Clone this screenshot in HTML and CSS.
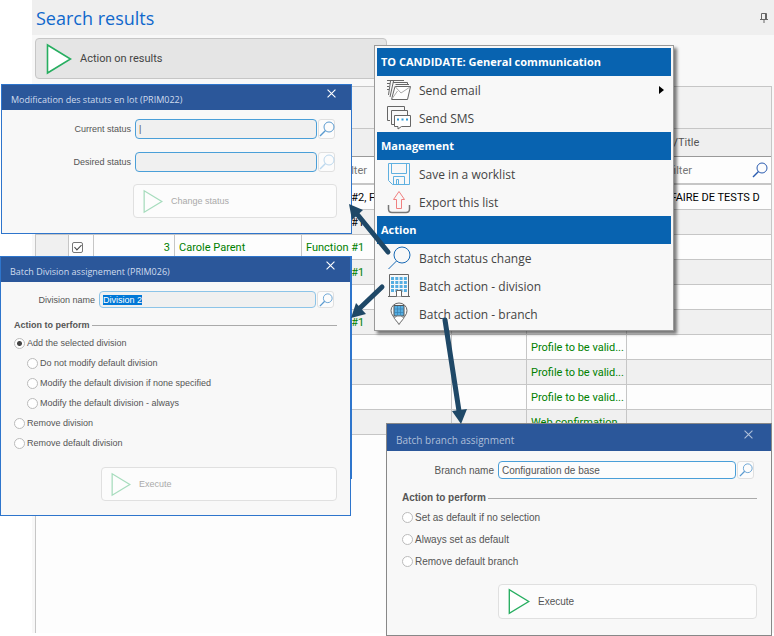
FILE: index.html
```
<!DOCTYPE html>
<html lang="en">
<head>
  <meta charset="UTF-8">
  <meta name="viewport" content="width=device-width, initial-scale=1">
  <title>Search results</title>
  <link rel="stylesheet" href="styles.css">
</head>
<body>

  <!-- shared icons -->
  <svg class="sprite" aria-hidden="true">
    <symbol id="lens" viewBox="0 0 16 16">
      <circle cx="10" cy="6" r="5" fill="none" stroke="currentColor"/>
      <path d="M6.5 9.5 L1 15" fill="none" stroke="currentColor" stroke-width="1.5"/>
    </symbol>
    <symbol id="play" viewBox="0 0 26 32">
      <path d="M1.5 2 V30 L24.5 16 Z" fill="#fff" stroke="#27ae60" stroke-width="1.6"/>
    </symbol>
    <symbol id="close" viewBox="0 0 8 8">
      <path d="M0.5 0.5 L7.5 7.5 M7.5 0.5 L0.5 7.5" fill="none" stroke="currentColor"/>
    </symbol>
  </svg>

  <main class="pane">
    <header class="pane-header">
      <h1>Search results</h1>
      <button class="pin" aria-label="Pin">
        <svg width="8" height="10" viewBox="0 0 8 10"><path d="M1.5 6 V0.5 H6.5 V6 M5.5 0.5 V6 M0 6.5 H8 M4 6.5 V10" fill="none" stroke="#666"/></svg>
      </button>
    </header>

    <button class="run-btn run-main"><svg width="26" height="32"><use href="#play"/></svg>Action on results</button>

    <div class="grid-box">
      <div class="group-band"></div>
      <table>
        <colgroup>
          <col class="c-ind"><col class="c-check"><col class="c-num"><col class="c-name">
          <col class="c-func"><col class="c-date"><col class="c-status"><col>
        </colgroup>
        <thead>
          <tr class="heads"><th></th><th></th><th></th><th></th><th></th><th></th><th></th><th>Function/Title</th></tr>
          <tr class="filters">
            <td></td><td></td><td></td><td></td>
            <td><input type="text" placeholder="Click to filter" aria-label="Filter function"></td>
            <td></td><td></td>
            <td>
              <div class="filter">
                <input type="text" placeholder="Click to filter" aria-label="Filter title">
                <svg width="16" height="16"><use href="#lens"/></svg>
              </div>
            </td>
          </tr>
        </thead>
        <tbody>
          <tr class="dark"><td></td><td></td><td></td><td></td><td>Function #2, F</td><td></td><td></td><td>NE PAS FAIRE DE TESTS D</td></tr>
          <tr class="dark"><td></td><td></td><td></td><td></td><td>Function #1</td><td></td><td></td><td></td></tr>
          <tr><td></td><td class="tick"><input type="checkbox" checked aria-label="Select Carole Parent"></td><td class="num">3</td><td>Carole Parent</td><td>Function #1</td><td></td><td></td><td></td></tr>
          <tr><td></td><td></td><td></td><td></td><td>Function #1</td><td></td><td></td><td></td></tr>
          <tr><td></td><td></td><td></td><td></td><td></td><td></td><td></td><td></td></tr>
          <tr><td></td><td></td><td></td><td></td><td>Function #1</td><td></td><td></td><td></td></tr>
          <tr><td></td><td></td><td></td><td></td><td></td><td></td><td>Profile to be valid...</td><td></td></tr>
          <tr><td></td><td></td><td></td><td></td><td></td><td></td><td>Profile to be valid...</td><td></td></tr>
          <tr><td></td><td></td><td></td><td></td><td></td><td></td><td>Profile to be valid...</td><td></td></tr>
          <tr><td></td><td></td><td></td><td></td><td></td><td></td><td>Web confirmation</td><td></td></tr>
        </tbody>
      </table>
    </div>
  </main>

  <!-- action menu -->
  <nav class="menu">
    <h2>TO CANDIDATE: General communication</h2>
    <button>
      <svg width="24" height="24" viewBox="0 0 24 24" fill="none" stroke="#666">
        <path d="M0 2.5 H17 M0 5.5 H3 M0 8.5 H2 M0 11.5 H2 M3.5 3 L1.5 17 M6.5 3 L3 19"/>
        <path d="M6 4.5 H20.5 V7 M8.5 6.5 H22"/>
        <path d="M8 8.5 H23.5 L20.5 21.5 H4.5 Z" fill="#fff"/>
        <path d="M8 8.5 L14 15 L23 9 M4.5 21.5 L10.5 13" stroke="#aaa"/>
      </svg>
      Send email
      <svg class="more" width="5" height="8"><path d="M0 0 L5 4 L0 8 Z"/></svg>
    </button>
    <button>
      <svg width="24" height="24" viewBox="0 0 24 24" fill="none" stroke="#666">
        <path d="M3 14.5 H0.5 V0.5 H17.5 V4 M7 18.5 H4.5 V4.5 H20.5 V9"/>
        <path d="M7.5 9.5 H23.5 V20.5 H14.5 L11 23 V20.5 H7.5 Z" fill="#fff"/>
        <path d="M10 13.5 H12 M14.5 13.5 H16.5 M19 13.5 H21" stroke="#2f9bd8" stroke-width="2"/>
      </svg>
      Send SMS
    </button>
    <h2>Management</h2>
    <button>
      <svg width="24" height="24" viewBox="0 0 24 24" fill="none" stroke="#5fb0e0">
        <path d="M1.5 1.5 H22.5 V22.5 H5.5 L1.5 18.5 Z M4.5 1.5 V11.5 H19.5 V1.5 M6.5 22.5 V14.5 H17.5 V22.5 M9.5 22 V17.5 H11.5 V22"/>
      </svg>
      Save in a worklist
    </button>
    <button>
      <svg width="24" height="24" viewBox="0 0 24 24" fill="none">
        <path d="M9.5 18.5 V9.5 H6.5 L12 1.5 L17.5 9.5 H14.5 V18.5 Z" stroke="#f08080"/>
        <path d="M1.5 15 V19 Q1.5 22.5 5 22.5 H19 Q22.5 22.5 22.5 19 V15" stroke="#777" stroke-width="1.5"/>
      </svg>
      Export this list
    </button>
    <h2>Action</h2>
    <button>
      <svg width="24" height="24" viewBox="0 0 24 24" fill="none" stroke="#1769b5">
        <circle cx="15" cy="9" r="8"/><path d="M9.5 15 L1.5 23"/>
      </svg>
      Batch status change
    </button>
    <button>
      <svg width="24" height="24" viewBox="0 0 24 24" fill="none">
        <path d="M2.5 22 V0.5 H21.5 V22 M1 22.5 H23" stroke="#666"/>
        <path d="M4 4.5 H20 M4 8.5 H20 M4 12.5 H20 M4 16.5 H20" stroke="#55aee2" stroke-width="3" stroke-dasharray="3 1.3"/>
        <path d="M9.5 22.5 V16.5 H14.5 V22.5" fill="#fff" stroke="#666"/>
      </svg>
      Batch action - division
    </button>
    <button>
      <svg width="24" height="24" viewBox="0 0 24 24" fill="none">
        <path d="M12 22.5 L6 14 Q4 11.5 4 8.5 A8 7.5 0 0 1 20 8.5 Q20 11.5 18 14 Z" stroke="#666"/>
        <path d="M7 3.5 H17 V14 H7 Z" fill="#55aee2" stroke="#555"/>
        <path d="M10.5 4 V14 M13.5 4 V14 M7 7 H17 M7 10.5 H17" stroke="#3a80b0" stroke-width="0.7"/>
        <path d="M7 16 L12 22 L17 16 L14 14 H10 Z" fill="#fff" stroke="#888"/>
      </svg>
      Batch action - branch
    </button>
  </nav>

  <!-- dialog left open behind the division one -->
  <div class="dialog dialog-behind"></div>

  <section class="dialog dialog-status">
    <header>
      <h2>Modification des statuts en lot (PRIM022)</h2>
      <button class="close" aria-label="Close"><svg width="9" height="9"><use href="#close"/></svg></button>
    </header>
    <div class="field">
      <label for="current">Current status</label>
      <input type="text" id="current" value="|">
      <button class="lookup" aria-label="Find current status"><svg width="16" height="16"><use href="#lens"/></svg></button>
    </div>
    <div class="field">
      <label for="desired">Desired status</label>
      <input type="text" id="desired">
      <button class="lookup faded" aria-label="Find desired status"><svg width="16" height="16"><use href="#lens"/></svg></button>
    </div>
    <button class="run-btn off"><svg width="20" height="25"><use href="#play"/></svg>Change status</button>
  </section>

  <section class="dialog dialog-division">
    <header>
      <h2>Batch Division assignement (PRIM026)</h2>
      <button class="close" aria-label="Close"><svg width="9" height="9"><use href="#close"/></svg></button>
    </header>
    <div class="field">
      <label for="division">Division name</label>
      <input type="text" id="division" value="Division 2">
      <button class="lookup" aria-label="Find division"><svg width="14" height="14"><use href="#lens"/></svg></button>
    </div>
    <fieldset>
      <legend>Action to perform</legend>
      <label><input type="radio" name="div" checked>Add the selected division</label>
      <label class="sub"><input type="radio" name="mode">Do not modify default division</label>
      <label class="sub"><input type="radio" name="mode">Modify the default division if none specified</label>
      <label class="sub"><input type="radio" name="mode">Modify the default division - always</label>
      <label><input type="radio" name="div">Remove division</label>
      <label><input type="radio" name="div">Remove default division</label>
    </fieldset>
    <button class="run-btn off"><svg width="20" height="25"><use href="#play"/></svg>Execute</button>
  </section>

  <section class="dialog dialog-branch">
    <header>
      <h2>Batch branch assignment</h2>
      <button class="close" aria-label="Close"><svg width="9" height="9"><use href="#close"/></svg></button>
    </header>
    <div class="field">
      <label for="branch">Branch name</label>
      <input type="text" id="branch" value="Configuration de base">
      <button class="lookup" aria-label="Find branch"><svg width="14" height="14"><use href="#lens"/></svg></button>
    </div>
    <fieldset>
      <legend>Action to perform</legend>
      <label><input type="radio" name="br">Set as default if no selection</label>
      <label><input type="radio" name="br">Always set as default</label>
      <label><input type="radio" name="br">Remove default branch</label>
    </fieldset>
    <button class="run-btn"><svg width="22" height="27"><use href="#play"/></svg>Execute</button>
  </section>

  <!-- arrows from menu entries to their dialogs -->
  <svg class="arrows" width="774" height="636" viewBox="0 0 774 636" aria-hidden="true">
    <g stroke="#1f4867" stroke-width="5" stroke-linecap="round">
      <path d="M388 252 L357 214"/>
      <path d="M382 287 L360 308"/>
      <path d="M445 320 L459 411"/>
    </g>
    <g fill="#1f4867">
      <path d="M349 204 L363 210 L352 220 Z"/>
      <path d="M351 318 L356 303 L366 314 Z"/>
      <path d="M461 424 L452 411 L467 409 Z"/>
    </g>
  </svg>

  <script>
    document.getElementById('division').select();
  </script>
</body>
</html>
```
FILE: styles.css
```
* {
  box-sizing: border-box;
}
body {
  margin: 0;
  position: relative;
  background: #fff;
  font-family: "Liberation Sans", Arial, sans-serif;
  font-size: 9px;
  color: #555;
}
h1, h2 {
  margin: 0;
  font-weight: normal;
}
button, input {
  font: inherit;
  color: inherit;
}
button {
  padding: 0;
  border: none;
  background: none;
}
svg {
  flex: none;
}
.sprite {
  position: absolute;
  width: 0;
  height: 0;
}

/* results pane */
.pane {
  display: flex;
  flex-direction: column;
  min-height: calc(100vh - 3px);
  margin: 0 0 3px 32px;
  background: #f8f8f8;
  font-family: Roboto, "Liberation Sans", sans-serif;
  font-size: 11px;
}
.pane-header {
  display: flex;
  align-items: center;
  justify-content: space-between;
  height: 35px;
  padding: 0 6px 0 4px;
  background: #efefef;
}
.pane-header h1 {
  font-family: "Open Sans", "Noto Sans", sans-serif;
  font-size: 18px;
  color: #1068cc;
}
.pin {
  display: flex;
}
.run-btn {
  display: flex;
  align-items: center;
  gap: 8px;
  height: 34px;
  padding-left: 9px;
  border: 1px solid #e0e0e0;
  border-radius: 4px;
  background: #fcfcfc;
  text-align: left;
}
.run-main {
  width: 352px;
  height: 41px;
  margin: 3px 0 7px 3px;
  padding-left: 10px;
  border: 1px solid #c6c6c6;
  background: #e5e5e5;
  color: #444;
}
.grid-box {
  flex: 1;
  margin: 0 2px 0 3px;
  border: 1px solid #c6c6c6;
  border-bottom: none;
  background: #fdfdfd;
}
.group-band {
  height: 42px;
  border-bottom: 1px solid #c6c6c6;
  background: #f2f2f2;
}
table {
  width: 100%;
  table-layout: fixed;
  border-collapse: separate;
  border-spacing: 0;
}
.c-ind { width: 33px; }
.c-check { width: 25px; }
.c-num { width: 81px; }
.c-name { width: 127px; }
.c-func { width: 150px; }
.c-date { width: 75px; }
.c-status { width: 100px; }
th, td {
  height: 25px;
  padding: 0 4px;
  border-right: 1px solid #c6c6c6;
  border-bottom: 1px solid #c6c6c6;
  overflow: hidden;
  white-space: nowrap;
  text-align: left;
  font-weight: normal;
}
th:last-child, td:last-child {
  padding-right: 0;
  border-right: none;
}
.heads th {
  height: 28px;
  border-bottom-color: #999;
  background: #efefef;
}
.filters td {
  height: 28px;
  border-bottom-width: 2px;
}
.filters input {
  width: 100%;
  padding: 0;
  border: none;
  background: none;
}
.filter {
  display: flex;
  align-items: center;
  padding-right: 3px;
  color: #2b5cb0;
}
input::placeholder {
  color: #777;
}
tbody td {
  color: #008000;
}
tbody tr:nth-child(even) td,
tbody td:first-child {
  background: #f0f0f0;
}
tbody .dark td {
  color: #000;
}
.num {
  text-align: right;
}
.tick {
  padding: 0 3px;
}
.tick input {
  display: block;
  appearance: none;
  width: 11px;
  height: 11px;
  margin: 0;
  border: 1px solid #777;
  border-radius: 2px;
  background: #fff;
  position: relative;
}
.tick input::after {
  content: "";
  position: absolute;
  left: 3px;
  top: 0;
  width: 3px;
  height: 6px;
  border: solid #444;
  border-width: 0 1px 1px 0;
  transform: rotate(45deg);
}

/* menu */
.menu {
  position: absolute;
  left: 374px;
  top: 45px;
  width: 300px;
  padding: 2px;
  border: 1px solid #999;
  background: #f8f8f8;
  box-shadow: 3px 3px 3px rgba(0,0,0,0.5);
  font-family: "Open Sans", "Noto Sans", sans-serif;
  font-size: 12px;
  color: #444;
}
.menu h2 {
  padding-left: 4px;
  background: #0863b0;
  color: #fff;
  font-size: 11px;
  font-weight: bold;
  line-height: 28px;
}
.menu button {
  display: flex;
  align-items: center;
  gap: 8px;
  width: 100%;
  height: 28px;
  padding: 0 7px 0 10px;
}
.menu .more {
  margin-left: auto;
}

/* dialogs */
.dialog {
  position: absolute;
  display: flex;
  flex-direction: column;
  border: 1px solid #2e75cc;
  background: #f8f8f8;
}
.dialog header {
  display: flex;
  align-items: flex-start;
  justify-content: space-between;
  height: 25px;
  padding: 4px 15px 0 9px;
  background: #2b579a;
  color: #fff;
}
.dialog h2 {
  font-family: "Open Sans", "Noto Sans", sans-serif;
  font-size: 9px;
  line-height: 22px;
  color: #d0dcee;
}
.close {
  display: flex;
}
.field {
  display: flex;
  align-items: center;
  justify-content: flex-end;
  gap: 1px;
  height: 20px;
}
.field label {
  margin-right: 3px;
}
.field input {
  height: 100%;
  padding: 0 3px;
  border: 1px solid #4a9fd8;
  border-radius: 4px;
  background: #f0f0f0;
  outline: none;
}
.field input::selection {
  background: #0078d7;
  color: #fff;
}
.lookup {
  display: flex;
  align-items: center;
  justify-content: center;
  width: 17px;
  height: 100%;
  border: 1px solid #e0e0e0;
  border-radius: 3px;
  background: #fcfcfc;
  color: #5b9bd0;
}
.faded {
  color: #bcd8ee;
}
.off {
  color: #aaa;
}
.off svg {
  opacity: 0.4;
}
fieldset {
  min-width: 0;
  margin: 0;
  padding: 0;
  border: none;
}
legend {
  display: flex;
  align-items: center;
  gap: 2px;
  width: 100%;
  padding: 0;
  font-weight: bold;
  line-height: 16px;
}
legend::after {
  content: "";
  flex: 1;
  height: 1px;
  background: #aaa;
}
fieldset label {
  display: flex;
  align-items: center;
  gap: 2px;
  height: 20px;
}
.sub {
  margin-left: 13px;
}
fieldset input {
  appearance: none;
  width: 11px;
  height: 11px;
  margin: 0;
  border: 1px solid #bbb;
  border-radius: 50%;
  background: #fff;
}
fieldset input:checked {
  background: radial-gradient(#444 0 2px, #fff 3px);
}

.dialog-behind {
  left: 0;
  top: 256px;
  width: 352px;
  height: 223px;
}
.dialog-status {
  left: 1px;
  top: 84px;
  width: 351px;
  height: 150px;
}
.dialog-status .field {
  margin: 9px 16px 4px 0;
}
.dialog-status .field input {
  width: 182px;
}
.dialog-status .run-btn {
  margin: 8px 14px 0 131px;
}
.dialog-division {
  left: 0;
  top: 256px;
  width: 351px;
  height: 260px;
}
.dialog-division .field {
  height: 17px;
  margin: 9px 16px 0 0;
}
.dialog-division .field input {
  width: 217px;
  border-color: #8cc4e8;
}
.dialog-division fieldset {
  margin: 9px 13px 0;
}
.dialog-division .run-btn {
  margin: 14px 13px 0 100px;
}
.dialog-branch {
  left: 386px;
  top: 423px;
  width: 386px;
  height: 213px;
  border-color: #888;
  font-size: 10px;
}
.dialog-branch header {
  height: 27px;
  padding: 6px 18px 0 9px;
}
.dialog-branch h2 {
  font-size: 10px;
  line-height: 20px;
}
.dialog-branch h2, .dialog-branch .close {
  color: #aebfd9;
}
.dialog-branch .field {
  height: 18px;
  margin: 10px 17px 0 0;
}
.dialog-branch .field input {
  width: 238px;
  background: #fcfcfc;
}
.dialog-branch fieldset {
  margin: 11px 14px 0 15px;
}
.dialog-branch fieldset label {
  height: 22px;
}
.dialog-branch .run-btn {
  height: 35px;
  margin: 12px 14px 0 111px;
}

.arrows {
  position: absolute;
  left: 0;
  top: 0;
  pointer-events: none;
}
```
